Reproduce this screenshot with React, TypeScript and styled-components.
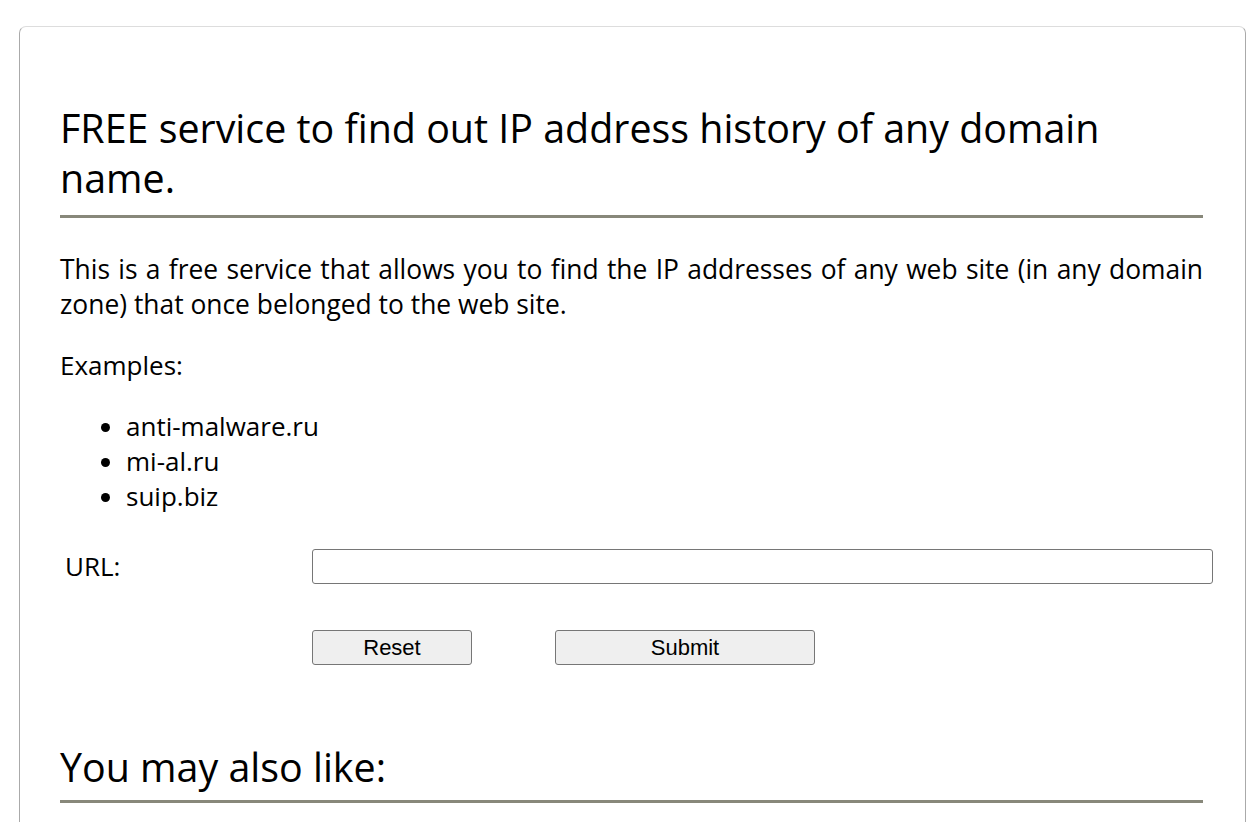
import React from 'react'
import styled, { createGlobalStyle, css } from 'styled-components'

const GlobalStyle = createGlobalStyle`
  html, body {
    margin: 0;
    padding: 0;
    background: #fff;
  }
  body {
    font-family: 'Open Sans', 'Noto Sans', sans-serif;
    color: #000;
  }
`

const examples = ['anti-malware.ru', 'mi-al.ru', 'suip.biz']

const App = () => {
  return (
    <>
      <GlobalStyle />
      <Page>
        <Card>
          <Title>FREE service to find out IP address history of any domain name.</Title>
          <Text>
            This is a free service that allows you to find the IP addresses of any web site (in any
            domain zone) that once belonged to the web site.
          </Text>
          <Label>Examples:</Label>
          <List>
            {examples.map((e) => (
              <Item key={e}>{e}</Item>
            ))}
          </List>
          <Form onSubmit={(ev) => ev.preventDefault()}>
            <FieldLabel htmlFor="url">URL:</FieldLabel>
            <UrlInput id="url" type="text" />
            <Buttons>
              <Button type="reset" width={160}>
                Reset
              </Button>
              <Button type="submit" width={260}>
                Submit
              </Button>
            </Buttons>
          </Form>
          <SubTitle>You may also like:</SubTitle>
        </Card>
      </Page>
    </>
  )
}

export default App

const Page = styled.div`
  padding: 26px 14px 0 19px;
`
const Card = styled.div`
  min-height: 900px;
  border: 1px solid #aaa;
  border-top-color: #ddd;
  border-radius: 7px;
  padding: 76px 42px 0 40px;
  box-sizing: border-box;
`
const headingBase = css`
  font-weight: 400;
  font-size: 39.4px;
  line-height: 50px;
  margin: 0;
  border-bottom: 3px solid #88887a;
`
const Title = styled.h1`
  ${headingBase};
  padding-bottom: 12px;
`
const SubTitle = styled.h2`
  ${headingBase};
  margin-top: 77px;
  padding-bottom: 8px;
`
const Text = styled.p`
  font-size: 26.4px;
  line-height: 35px;
  text-align: justify;
  margin: 34px 0 0;
`
const Label = styled.p`
  font-size: 26px;
  line-height: 35px;
  margin: 26px 0 0;
`
const List = styled.ul`
  margin: 26px 0 0;
  padding-left: 66px;
`
const Item = styled.li`
  font-size: 26px;
  line-height: 35px;
`
const Form = styled.form`
  display: grid;
  grid-template-columns: 252px 901px;
  row-gap: 46px;
  margin-top: 35px;
`
const FieldLabel = styled.label`
  font-size: 26px;
  line-height: 35px;
  padding-left: 5px;
`
const UrlInput = styled.input`
  height: 35px;
  box-sizing: border-box;
  border: 1px solid #767676;
  border-radius: 3px;
  background: #fff;
  margin: 0;
  font-size: 20px;
`
const Buttons = styled.div`
  grid-column: 2;
  display: flex;
  gap: 83px;
`
const Button = styled.button<{ width: number }>`
  width: ${(p) => p.width}px;
  height: 35px;
  box-sizing: border-box;
  margin: 0;
  padding: 0;
  background: #efefef;
  border: 1px solid #767676;
  border-radius: 3px;
  font-family: 'Liberation Sans', Arial, sans-serif;
  font-size: 22px;
  color: #000;
`
